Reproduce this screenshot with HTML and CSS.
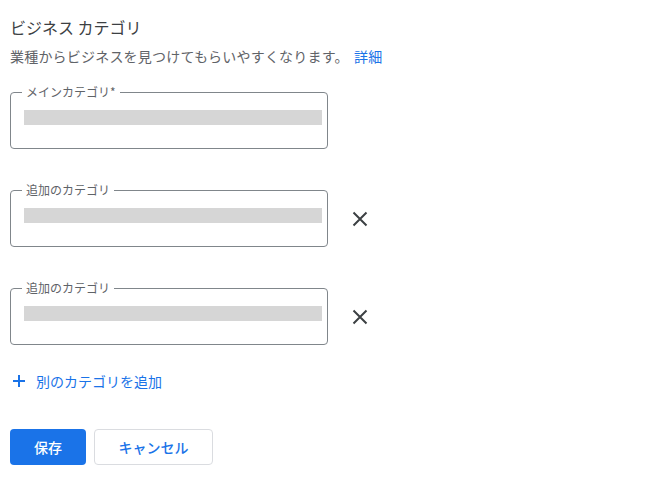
FILE: index.html
```html
<!DOCTYPE html>
<html lang="ja">
<head>
<meta charset="utf-8">
<link rel="stylesheet" href="styles.css">
</head>
<body>
<div class="panel">
  <h2 class="title">ビジネス カテゴリ</h2>
  <p class="desc">業種からビジネスを見つけてもらいやすくなります。 <a class="link" href="#">詳細</a></p>

  <div class="field-row">
    <fieldset class="field">
      <legend class="field-label">メインカテゴリ*</legend>
      <div class="redact"></div>
    </fieldset>
  </div>

  <div class="field-row">
    <fieldset class="field">
      <legend class="field-label">追加のカテゴリ</legend>
      <div class="redact"></div>
    </fieldset>
    <button class="remove" aria-label="削除">
      <svg width="16" height="16" viewBox="0 0 16 16"><path d="M1.5 1.5 L14.5 14.5 M14.5 1.5 L1.5 14.5" stroke="#3c4043" stroke-width="2" fill="none"/></svg>
    </button>
  </div>

  <div class="field-row">
    <fieldset class="field">
      <legend class="field-label">追加のカテゴリ</legend>
      <div class="redact"></div>
    </fieldset>
    <button class="remove" aria-label="削除">
      <svg width="16" height="16" viewBox="0 0 16 16"><path d="M1.5 1.5 L14.5 14.5 M14.5 1.5 L1.5 14.5" stroke="#3c4043" stroke-width="2" fill="none"/></svg>
    </button>
  </div>

  <a class="add" href="#">
    <svg width="14" height="14" viewBox="0 0 14 14"><path d="M7 1 V13 M1 7 H13" stroke="#1a73e8" stroke-width="2" fill="none"/></svg>
    <span>別のカテゴリを追加</span>
  </a>

  <div class="actions">
    <button class="btn btn-primary">保存</button>
    <button class="btn btn-secondary">キャンセル</button>
  </div>
</div>
</body>
</html>
```

FILE: styles.css
```css
* { box-sizing: border-box; }
body {
  margin: 0;
  background: #fff;
  font-family: "Noto Sans CJK JP", "Noto Sans", sans-serif;
  color: #3c4043;
}
.panel {
  padding: 15px 0 0 10px;
}
.title {
  margin: 0;
  font-size: 16px;
  line-height: 24px;
  font-weight: 400;
  color: #3c4043;
}
.desc {
  margin: 7px 0 0;
  font-size: 14px;
  line-height: 20px;
  letter-spacing: 0.2px;
  color: #5f6368;
}
.link {
  color: #1a73e8;
  text-decoration: none;
  margin-left: 2px;
}
.field-row {
  display: flex;
  align-items: flex-end;
  margin-top: 18px;
}
.field-row + .field-row { margin-top: 33px; }
.field {
  width: 318px;
  margin: 0;
  padding: 10px 5px 23px 13px;
  border: 1px solid #80868b;
  border-radius: 4px;
}
.field-label {
  margin-left: -2px;
  padding: 0 4px;
  font-size: 12px;
  line-height: 16px;
  color: #5f6368;
}
.redact {
  height: 15px;
  background: #d6d6d6;
}
.remove {
  width: 24px;
  height: 24px;
  margin: 0 0 16px 20px;
  padding: 4px;
  border: 0;
  background: transparent;
  display: flex;
  align-items: center;
  justify-content: center;
}
.add {
  display: flex;
  align-items: center;
  gap: 10px;
  margin-top: 26px;
  padding-left: 2px;
  font-size: 14px;
  line-height: 20px;
  color: #1a73e8;
  text-decoration: none;
}
.actions {
  display: flex;
  gap: 8px;
  margin-top: 38px;
}
.btn {
  height: 36px;
  border-radius: 4px;
  font-family: inherit;
  font-size: 14px;
  font-weight: 500;
}
.btn-primary {
  width: 76px;
  background: #1a73e8;
  border: 0;
  color: #fff;
}
.btn-secondary {
  width: 119px;
  background: #fff;
  border: 1px solid #dadce0;
  color: #1a73e8;
}
```
